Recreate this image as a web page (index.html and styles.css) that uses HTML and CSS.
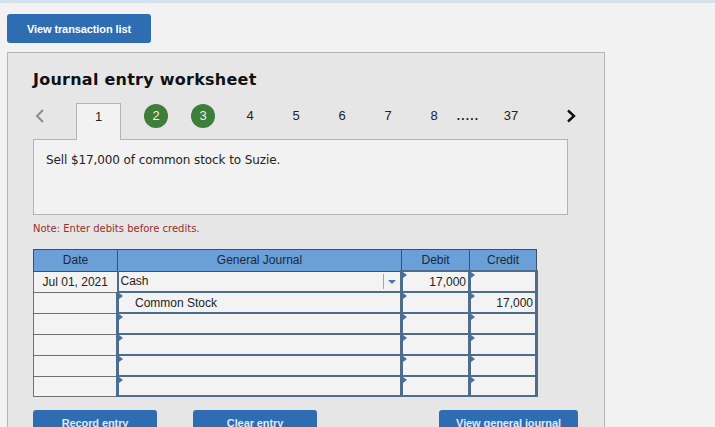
FILE: index.html
```html
<!DOCTYPE html>
<html>
<head>
<meta charset="utf-8">
<link rel="stylesheet" href="styles.css">
</head>
<body>
<div class="topband"></div>
<div class="page">
  <button class="btn btn-list">View transaction list</button>
  <div class="panel">
    <h1 class="title">Journal entry worksheet</h1>
    <div class="nav">
      <span class="arrow prev"><svg width="14" height="14" viewBox="0 0 14 14"><polyline points="10,1 4,7 10,13" fill="none" stroke="#8c8c8c" stroke-width="2"/></svg></span>
      <span class="tab active">1</span>
      <span class="circle">2</span>
      <span class="circle">3</span>
      <span class="num">4</span>
      <span class="num">5</span>
      <span class="num">6</span>
      <span class="num">7</span>
      <span class="num n8">8</span>
      <span class="dots">.....</span>
      <span class="num n37">37</span>
      <span class="arrow next"><svg width="14" height="14" viewBox="0 0 14 14"><polyline points="4,1.5 10,7 4,12.5" fill="none" stroke="#111" stroke-width="2.4"/></svg></span>
    </div>
    <div class="desc">Sell $17,000 of common stock to Suzie.</div>
    <p class="note">Note: Enter debits before credits.</p>
    <table class="journal">
      <thead>
        <tr><th class="c-date">Date</th><th class="c-gj">General Journal</th><th class="c-dr">Debit</th><th class="c-cr">Credit</th></tr>
      </thead>
      <tbody>
        <tr><td class="date">Jul 01, 2021</td><td class="in gj focus">Cash<span class="dd"></span></td><td class="in amt mark">17,000</td><td class="in amt mark"></td></tr>
        <tr><td class="date"></td><td class="in gj mark indent">Common Stock</td><td class="in amt mark"></td><td class="in amt mark">17,000</td></tr>
        <tr><td class="date"></td><td class="in gj mark"></td><td class="in amt mark"></td><td class="in amt mark"></td></tr>
        <tr><td class="date"></td><td class="in gj mark"></td><td class="in amt mark"></td><td class="in amt mark"></td></tr>
        <tr><td class="date"></td><td class="in gj mark"></td><td class="in amt mark"></td><td class="in amt mark"></td></tr>
        <tr class="lastrow"><td class="date"></td><td class="in gj mark"></td><td class="in amt mark"></td><td class="in amt mark"></td></tr>
      </tbody>
    </table>
    <div class="actions">
      <button class="btn btn-rec">Record entry</button>
      <button class="btn btn-clr">Clear entry</button>
      <button class="btn btn-view">View general journal</button>
    </div>
  </div>
</div>
</body>
</html>
```

FILE: styles.css
```css
html, body {
  margin: 0;
  padding: 0;
  background: #f2f2f2;
  overflow: hidden;
  height: 427px;
}
body {
  font-family: "Liberation Sans", Arial, sans-serif;
}
.topband {
  height: 3px;
  background: #d4e2ed;
}
.page {
  padding: 11px 0 0 7px;
}
.btn {
  display: block;
  border: none;
  border-radius: 3px;
  background: #2f6db3;
  color: #ffffff;
  font-family: "Liberation Sans", Arial, sans-serif;
  font-weight: bold;
  font-size: 11px;
  letter-spacing: -0.1px;
  height: 29px;
  padding: 0;
  cursor: pointer;
}
.btn-list {
  width: 144px;
}
.panel {
  margin-top: 9px;
  height: 400px;
  width: 598px;
  box-sizing: border-box;
  background: #e6e6e6;
  border: 1px solid #b6b6b6;
  padding: 0 0 0 25px;
}
.title {
  margin: 0;
  padding-top: 16px;
  font-family: "DejaVu Sans", Verdana, sans-serif;
  font-weight: bold;
  font-size: 16px;
  line-height: 22px;
  color: #111;
  letter-spacing: 0.25px;
}
.nav {
  display: flex;
  align-items: flex-start;
  height: 37px;
  margin-top: 12px;
  font-size: 13px;
  color: #222;
}
.nav > span {
  display: block;
  text-align: center;
  line-height: 26px;
  height: 26px;
}
.arrow {
  width: 14px;
}
.arrow svg {
  display: block;
  margin-top: 6px;
}
.arrow.prev {
  margin-right: 29px;
}
.nav .tab.active {
  width: 45px;
  height: 37px;
  box-sizing: border-box;
  border: 1px solid #b3b3b3;
  border-bottom: none;
  background: #f2f2f2;
  line-height: 25px;
  position: relative;
  z-index: 1;
}
.nav .circle {
  width: 24px;
  height: 24px;
  line-height: 24px;
  margin-top: 1px;
  margin-left: 23px;
  border-radius: 50%;
  background: #3e7d3a;
  color: #f1f1f1;
}
.nav .num {
  width: 46px;
}
.nav .circle + .num {
  margin-left: 12px;
}
.nav .num.n8 {
  width: 30px;
  margin-left: 8px;
}
.nav .dots {
  width: 38px;
  font-weight: bold;
  letter-spacing: 1.2px;
  font-size: 12px;
}
.nav .num.n37 {
  width: 30px;
  margin-left: 9px;
}
.arrow.next {
  margin-left: 38px;
}
.desc {
  width: 535px;
  height: 76px;
  box-sizing: border-box;
  background: #f2f2f2;
  border: 1px solid #b3b3b3;
  margin-top: -1px;
  padding: 13px 0 0 12px;
  font-family: "DejaVu Sans", Verdana, sans-serif;
  font-size: 12px;
  color: #222;
  letter-spacing: -0.1px;
}
.note {
  margin: 8px 0 0 0;
  font-family: "DejaVu Sans", Verdana, sans-serif;
  font-size: 10px;
  color: #9c2e2e;
  line-height: 12px;
}
.journal {
  margin-top: 14px;
  border-collapse: collapse;
  table-layout: fixed;
  width: 503px;
  font-size: 12px;
}
.journal th {
  height: 20px;
  padding: 0;
  background: #6b9fd7;
  color: #1a2a3e;
  font-weight: normal;
  border: 1px solid #3d5166;
}
.c-date { width: 83px; }
.c-gj { width: 283px; }
.c-dr { width: 67px; }
.c-cr { width: 66px; }
.journal td {
  height: 19px;
  padding: 0;
  color: #222;
  position: relative;
}
.journal .lastrow td {
  height: 18px;
}
.journal td.date {
  border: 1px solid #707070;
  background: #f3f3f3;
  text-align: center;
}
.journal td.in {
  border: 3px solid #4e6c8c;
  border-top-width: 2px;
  border-bottom-width: 2px;
  background: #f3f3f3;
}
.journal td.gj {
  padding-left: 2px;
}
.journal td.indent {
  padding-left: 16px;
}
.journal td.amt {
  text-align: right;
  padding-right: 2px;
}
.journal td.focus {
  border: 1px dotted #2e4a66;
  border-left: 2px solid #4e6c8c;
}
.mark::before {
  content: "";
  position: absolute;
  left: 0;
  top: 0;
  border-left: 4px solid #3c73b5;
  border-top: 3px solid transparent;
  border-bottom: 3px solid transparent;
}
.dd {
  position: absolute;
  right: 0;
  top: 2px;
  bottom: 2px;
  width: 16px;
  border-left: 1px solid #9aa;
}
.dd::after {
  content: "";
  position: absolute;
  left: 4px;
  top: 6px;
  border-top: 4px solid #4a78aa;
  border-left: 4px solid transparent;
  border-right: 4px solid transparent;
}
.actions {
  display: flex;
  margin-top: 13px;
}
.btn-rec { width: 124px; }
.btn-clr { width: 124px; margin-left: 36px; }
.btn-view { width: 139px; margin-left: 122px; }
.actions .btn {
  color: #dfeaf7;
  font-size: 11px;
  padding-bottom: 4px;
}
```
